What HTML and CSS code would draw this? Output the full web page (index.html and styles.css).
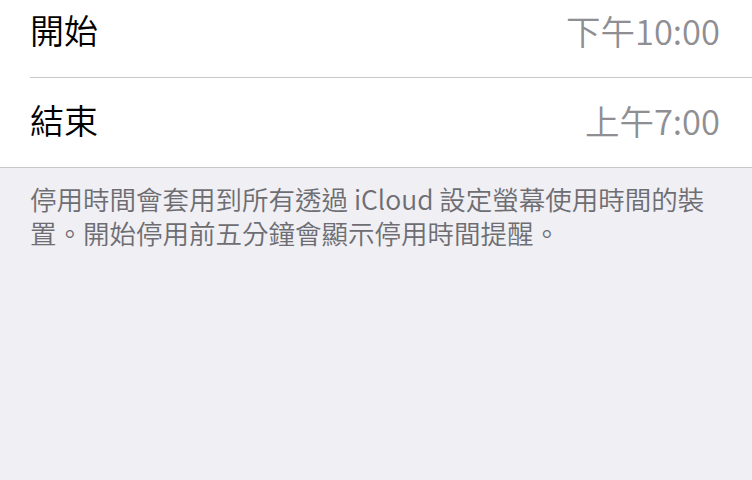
FILE: index.html
```html
<!DOCTYPE html>
<html lang="zh-Hant">

<head>
    <meta charset="UTF-8">
    <title>停用時間</title>
    <link rel="stylesheet" href="styles.css">
</head>

<body>
    <div class="group">
        <div class="row">
            <span class="label">開始</span>
            <span class="value">下午10:00</span>
        </div>
        <div class="row">
            <span class="label">結束</span>
            <span class="value">上午7:00</span>
        </div>
    </div>
    <p class="footer">停用時間會套用到所有透過 iCloud 設定螢幕使用時間的裝置。開始停用前五分鐘會顯示停用時間提醒。</p>
</body>

</html>
```

FILE: styles.css
```css
body {
    margin: 0;
    padding: 0;
    background-color: #efeff4;
    font-family: "Noto Sans CJK TC", "Noto Sans", sans-serif;
    font-weight: 350;
    height: 480px;
    overflow: hidden;
}

.group {
    background-color: #fff;
    margin-top: -12px;
    padding-left: 30px;
    border-bottom: 1px solid #c8c7cc;
}

.row {
    display: flex;
    justify-content: space-between;
    align-items: center;
    height: 89px;
    padding-right: 32px;
    padding-bottom: 6px;
    box-sizing: border-box;
}

.row + .row {
    border-top: 1px solid #c8c7cc;
    height: 90px;
}

.label {
    font-size: 34px;
    line-height: 40px;
    color: #000;
}

.value {
    font-size: 34.5px;
    line-height: 40px;
    color: #8e8e93;
}

.footer {
    margin: 14px 0 0;
    padding: 0 30px;
    font-size: 26.5px;
    line-height: 34px;
    color: #6d6d72;
}
```
